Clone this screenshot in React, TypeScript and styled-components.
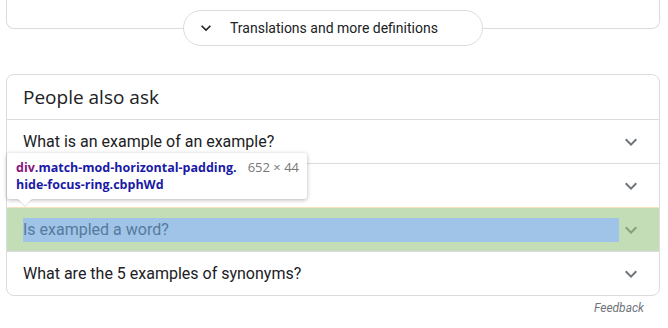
import React from "react";
import styled, { createGlobalStyle } from "styled-components";

const GlobalStyle = createGlobalStyle`
  html, body { margin: 0; padding: 0; background: #fff; }
  body { font-family: Roboto, Arial, sans-serif; color: #202124; }
  * { box-sizing: border-box; }
`;

const Page = styled.div`
  width: 668px;
  padding: 0 8px 0 6px;
`;

const TopCard = styled.div`
  height: 29px;
  border: 1px solid #dadce0;
  border-top: none;
  border-radius: 0 0 8px 8px;
`;

const ButtonRow = styled.div`
  display: flex;
  justify-content: center;
  margin-top: -19px;
`;

const PillButton = styled.div`
  width: 300px;
  height: 36px;
  display: flex;
  align-items: center;
  gap: 14px;
  padding-left: 12px;
  border: 1px solid #dadce0;
  border-radius: 18px;
  background: #fff;
  font-size: 14px;
  color: #202124;
`;

const PaaCard = styled.div`
  position: relative;
  margin-top: 28px;
  border: 1px solid #dadce0;
  border-radius: 8px;
`;

const Header = styled.div`
  height: 45px;
  display: flex;
  align-items: center;
  padding: 0 16px;
  border-bottom: 1px solid #dadce0;
  font-family: "Open Sans", Roboto, sans-serif;
  font-size: 19px;
  color: #202124;
`;

const Row = styled.div<{ $first?: boolean; $active?: boolean }>`
  height: ${(p) => (p.$first ? 43 : 44)}px;
  display: flex;
  align-items: center;
  padding: 0 16px;
  border-top: ${(p) =>
    p.$first ? "none" : p.$active ? "1px solid #f6e3bd" : "1px solid #dadce0"};
  background: ${(p) => (p.$active ? "#c3ddb7" : "transparent")};
`;

const LastRow = styled(Row)`
  border-radius: 0 0 8px 8px;
`;

const Question = styled.div<{ $active?: boolean }>`
  flex: 1;
  height: 24px;
  line-height: 24px;
  font-size: 16px;
  color: ${(p) => (p.$active ? "#557a9c" : "#202124")};
  background: ${(p) => (p.$active ? "#a0c4e8" : "transparent")};
`;

const ChevronBox = styled.div<{ $active?: boolean; $dark?: boolean; $size?: number }>`
  width: ${(p) => p.$size ?? 24}px;
  height: ${(p) => p.$size ?? 24}px;
  color: ${(p) => (p.$dark ? "#202124" : p.$active ? "#83a07c" : "#70757a")};
  display: flex;
`;

const Tooltip = styled.div`
  position: absolute;
  top: 78px;
  left: 0;
  width: 300px;
  padding: 6px 8px 6px 9px;
  background: #fff;
  border-radius: 3px;
  box-shadow: 0 1px 4px rgba(0, 0, 0, 0.3);
  display: flex;
  justify-content: space-between;
  font-family: "Open Sans", Roboto, sans-serif;
  font-size: 12.5px;
  line-height: 17px;
  z-index: 2;

  &::after {
    content: "";
    position: absolute;
    left: 11px;
    bottom: -7px;
    border-left: 7px solid transparent;
    border-right: 7px solid transparent;
    border-top: 7px solid #fff;
    filter: drop-shadow(0 1px 0 rgba(0, 0, 0, 0.12));
  }
`;

const Selector = styled.div`
  font-weight: 700;
  color: #1a1aa6;
`;

const Tag = styled.span`
  color: #881280;
`;

const Size = styled.div`
  color: #777;
  white-space: nowrap;
  font-size: 13px;
`;

const Feedback = styled.div`
  text-align: right;
  padding-right: 16px;
  margin-top: 4px;
  font-size: 12px;
  line-height: 16px;
  font-style: italic;
  color: #70757a;
`;

const Chevron = ({ size = 24 }: { size?: number }) => (
  <svg width={size} height={size} viewBox="0 0 24 24" fill="currentColor">
    <path d="M16.59 8.59L12 13.17 7.41 8.59 6 10l6 6 6-6z" />
  </svg>
);

const questions = [
  "What is an example of an example?",
  "",
  "Is exampled a word?",
  "What are the 5 examples of synonyms?",
];

export default function App() {
  return (
    <>
      <GlobalStyle />
      <Page>
        <TopCard />
        <ButtonRow>
          <PillButton>
            <ChevronBox $dark $size={20}>
              <Chevron size={20} />
            </ChevronBox>
            Translations and more definitions
          </PillButton>
        </ButtonRow>
        <PaaCard>
          <Header>People also ask</Header>
          {questions.map((q, i) => {
            const active = i === 2;
            const R = i === questions.length - 1 ? LastRow : Row;
            return (
              <R key={i} $first={i === 0} $active={active}>
                <Question $active={active}>{q}</Question>
                <ChevronBox $active={active}>
                  <Chevron />
                </ChevronBox>
              </R>
            );
          })}
          <Tooltip>
            <Selector>
              <Tag>div</Tag>.match-mod-horizontal-padding.
              <br />
              hide-focus-ring.cbphWd
            </Selector>
            <Size>652 × 44</Size>
          </Tooltip>
        </PaaCard>
        <Feedback>Feedback</Feedback>
      </Page>
    </>
  );
}
